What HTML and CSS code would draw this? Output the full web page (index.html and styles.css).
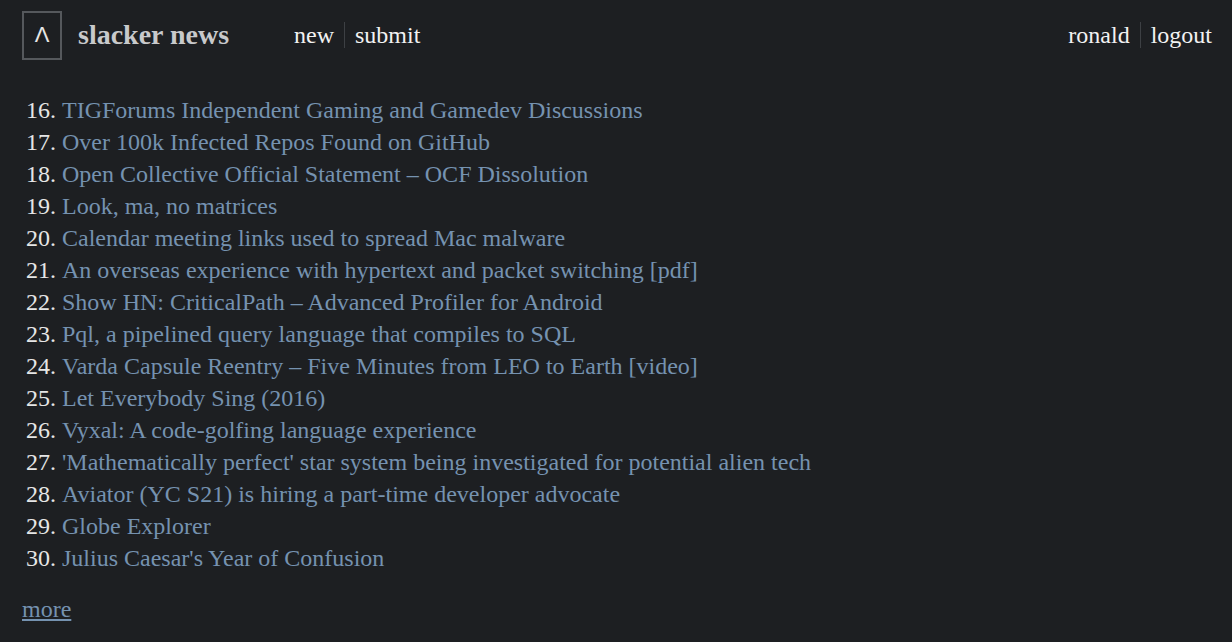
FILE: index.html
```html
<!DOCTYPE html>
<html>
<head>
<meta charset="utf-8">
<link rel="stylesheet" href="styles.css">
</head>
<body>
<header class="top">
  <div class="brand">
    <a class="logo" href="#">&#923;</a>
    <span class="name">slacker news</span>
  </div>
  <nav class="nav">
    <a href="#">new</a>
    <span class="sep"></span>
    <a href="#">submit</a>
  </nav>
  <nav class="nav user">
    <a href="#">ronald</a>
    <span class="sep"></span>
    <a href="#">logout</a>
  </nav>
</header>
<ol class="stories">
  <li><span class="num">16.</span><a href="#">TIGForums Independent Gaming and Gamedev Discussions</a></li>
  <li><span class="num">17.</span><a href="#">Over 100k Infected Repos Found on GitHub</a></li>
  <li><span class="num">18.</span><a href="#">Open Collective Official Statement – OCF Dissolution</a></li>
  <li><span class="num">19.</span><a href="#">Look, ma, no matrices</a></li>
  <li><span class="num">20.</span><a href="#">Calendar meeting links used to spread Mac malware</a></li>
  <li><span class="num">21.</span><a href="#">An overseas experience with hypertext and packet switching [pdf]</a></li>
  <li><span class="num">22.</span><a href="#">Show HN: CriticalPath – Advanced Profiler for Android</a></li>
  <li><span class="num">23.</span><a href="#">Pql, a pipelined query language that compiles to SQL</a></li>
  <li><span class="num">24.</span><a href="#">Varda Capsule Reentry – Five Minutes from LEO to Earth [video]</a></li>
  <li><span class="num">25.</span><a href="#">Let Everybody Sing (2016)</a></li>
  <li><span class="num">26.</span><a href="#">Vyxal: A code-golfing language experience</a></li>
  <li><span class="num">27.</span><a href="#">'Mathematically perfect' star system being investigated for potential alien tech</a></li>
  <li><span class="num">28.</span><a href="#">Aviator (YC S21) is hiring a part-time developer advocate</a></li>
  <li><span class="num">29.</span><a href="#">Globe Explorer</a></li>
  <li><span class="num">30.</span><a href="#">Julius Caesar's Year of Confusion</a></li>
</ol>
<a class="more" href="#">more</a>
</body>
</html>
```
FILE: styles.css
```css
html, body {
  margin: 0;
  padding: 0;
  background: #1d1f22;
  color: #e6e6e6;
  font-family: "Liberation Serif", "Times New Roman", serif;
  font-size: 24px;
}
a {
  color: inherit;
  text-decoration: none;
}
.top {
  display: flex;
  align-items: center;
  height: 70px;
  padding: 0 20px 0 22px;
}
.brand {
  display: flex;
  align-items: center;
  gap: 16px;
  width: 272px;
}
.logo {
  box-sizing: border-box;
  width: 40px;
  height: 49px;
  border: 2px solid #55585c;
  display: flex;
  align-items: center;
  justify-content: center;
  font-family: "Liberation Sans", sans-serif;
  font-size: 22px;
  color: #e6e6e6;
  font-weight: normal;
}
.name {
  font-weight: bold;
  font-size: 28px;
  color: #c8c9cb;
}
.nav {
  display: flex;
  align-items: center;
  gap: 10px;
  color: #f2f2f2;
}
.sep {
  width: 1px;
  height: 26px;
  background: #3d4044;
}
.user {
  margin-left: auto;
}
.stories {
  list-style: none;
  margin: 24px 0 0 26px;
  padding: 0;
  line-height: 32px;
}
.stories li {
  display: flex;
  gap: 6px;
}
.num {
  color: #e6e6e6;
  width: 30px;
}
.stories a {
  color: #7592b0;
}
.more {
  display: inline-block;
  margin: 22px 0 0 22px;
  color: #7592b0;
  text-decoration: underline;
}
```
